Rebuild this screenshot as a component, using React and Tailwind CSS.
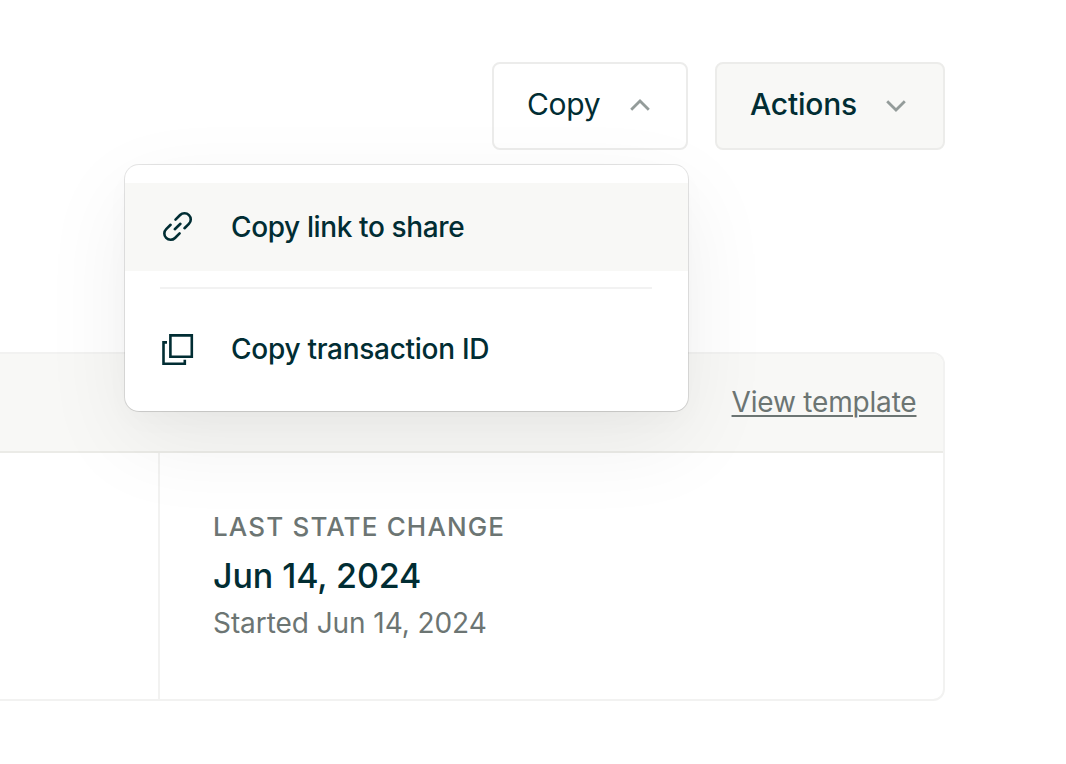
import { useState } from 'react';

function Chevron({ up }) {
    return (
        <svg width="20" height="12" viewBox="0 0 20 12" fill="none" stroke="#949c9a" strokeWidth="2.8" className={up ? '-mt-0.5' : '-mt-px'}>
            <path d={up ? 'M1.2 10.8 10 2l8.8 8.8' : 'M1.2 1.2 10 10l8.8-8.8'} />
        </svg>
    );
}

function LinkIcon() {
    return (
        <svg width="36" height="36" viewBox="0 0 36 36" fill="none" stroke="#012d33" strokeWidth="2.6" strokeLinecap="round">
            <path d="M15.5 10.6 20.1 6a6.25 6.25 0 0 1 8.8 8.9L24.5 19.2" />
            <path d="M19.6 24.4 15 29a6.25 6.25 0 0 1-8.8-8.9L10.6 15.8" />
            <path d="M14.8 20.2 20.4 14.8" />
        </svg>
    );
}

function CopyIcon() {
    return (
        <svg width="36" height="36" viewBox="0 0 36 36" fill="none" stroke="#012d33" strokeWidth="2.6">
            <path d="M10.4 4.4h21.4v21.4H10.4z" />
            <path d="M7 11.4H3.5v21.3h21.3v-4" />
        </svg>
    );
}

function MenuItem({ icon, children, active }) {
    return (
        <button type="button" className={`flex h-[88px] w-full items-center pl-[35px] text-left text-[28px] font-medium ${active ? 'bg-[#f8f8f6]' : 'bg-white'}`}>
            {icon}
            <span className="ml-[35px]">{children}</span>
        </button>
    );
}

function CopyMenu() {
    const [open, setOpen] = useState(true);

    return (
        <div className="relative">
            <button type="button" onClick={() => setOpen(!open)} className="flex h-[88px] w-[196px] items-center justify-between rounded-lg border-2 border-[#ececeb] bg-white pr-9 pl-[33px] text-[30px]">
                <span className="-mt-1 tracking-[-0.3px]">Copy</span>
                <Chevron up={open} />
            </button>
            {open && (
                <div className="absolute top-[103px] right-0 z-10 w-[563px] rounded-[14px] bg-white py-[18px] shadow-[0_0_0_1px_rgba(0,0,0,0.1),0_1px_1px_rgba(0,0,0,0.06),0_30px_90px_rgba(0,0,0,0.065),0_10px_30px_rgba(0,0,0,0.02)]">
                    <MenuItem icon={<LinkIcon />} active>
                        <span className="tracking-[-0.38px]">Copy link to share</span>
                    </MenuItem>
                    <div className="my-4 mr-9 ml-[35px] h-0.5 bg-[#f2f2f2]" />
                    <MenuItem icon={<CopyIcon />}>
                        <span className="tracking-[-0.28px]">Copy transaction ID</span>
                    </MenuItem>
                </div>
            )}
        </div>
    );
}

function App() {
    return (
        <div className="h-[764px] w-[1066px] overflow-hidden bg-white pt-[62px] pr-[121px] font-[Inter,sans-serif] text-[#012d33]">
            <div className="flex justify-end gap-[27px]">
                <CopyMenu />
                <button type="button" className="flex h-[88px] w-[230px] items-center justify-between rounded-lg border-2 border-[#ececea] bg-[#f8f8f6] pr-[37px] pl-[33px] text-[30px] font-medium">
                    <span className="-mt-1 tracking-[-0.2px]">Actions</span>
                    <Chevron />
                </button>
            </div>

            <div className="mt-[202px] flex h-[349px] flex-col overflow-hidden rounded-r-xl border-y-2 border-r-2 border-[#f2f2f1]">
                <div className="flex h-[99px] shrink-0 items-center justify-end border-b-2 border-[#ebebe7] bg-[#f8f8f6] pr-[26.5px]">
                    <a href="#" className="-mt-0.5 text-[28px] tracking-[-0.18px] text-[#6c7573] underline decoration-2 underline-offset-[3px]">View template</a>
                </div>
                <div className="flex flex-1">
                    <div className="w-[158px]" />
                    <div className="flex-1 border-l-2 border-[#f2f2f1] pt-[54px] pl-[53px]">
                        <div className="text-[26px] leading-[40px] font-medium tracking-[1.15px] text-[#6c7573]">LAST STATE CHANGE</div>
                        <div className="mt-1 text-[34px] leading-[50px] font-medium tracking-[-0.1px]">Jun 14, 2024</div>
                        <div className="mt-0.5 text-[28px] leading-[40px] tracking-[-0.07px] text-[#6c7573]">Started Jun 14, 2024</div>
                    </div>
                </div>
            </div>
        </div>
    );
}

export default App;
